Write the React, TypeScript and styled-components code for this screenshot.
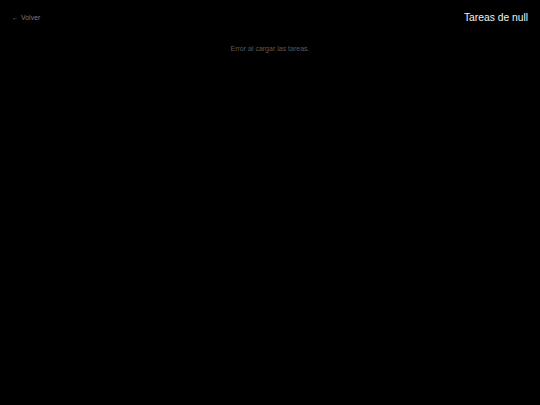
import React from "react";
import styled, { createGlobalStyle } from "styled-components";

const Global = createGlobalStyle`
  html, body { margin: 0; padding: 0; background: #000; }
  body { font-family: "Liberation Sans", Arial, sans-serif; }
`;

const Page = styled.div`
  min-height: 405px;
  background: #000;
  display: flex;
  flex-direction: column;
`;

const Header = styled.header`
  display: flex;
  justify-content: space-between;
  align-items: center;
  padding: 9px 12px 0 12px;
  height: 16px;
`;

const BackLink = styled.a`
  color: #7a7a7a;
  font-size: 7px;
  text-decoration: none;
  cursor: pointer;
`;

const Title = styled.h1`
  margin: 0;
  color: #f2f2f2;
  font-size: 10.3px;
  font-weight: 400;
`;

const Message = styled.p`
  margin: 20px 0 0 0;
  text-align: center;
  color: #5c5c5c;
  font-size: 7px;
`;

export default function App() {
  return (
    <>
      <Global />
      <Page>
        <Header>
          <BackLink>← Volver</BackLink>
          <Title>Tareas de null</Title>
        </Header>
        <Message>Error al cargar las tareas.</Message>
      </Page>
    </>
  );
}
